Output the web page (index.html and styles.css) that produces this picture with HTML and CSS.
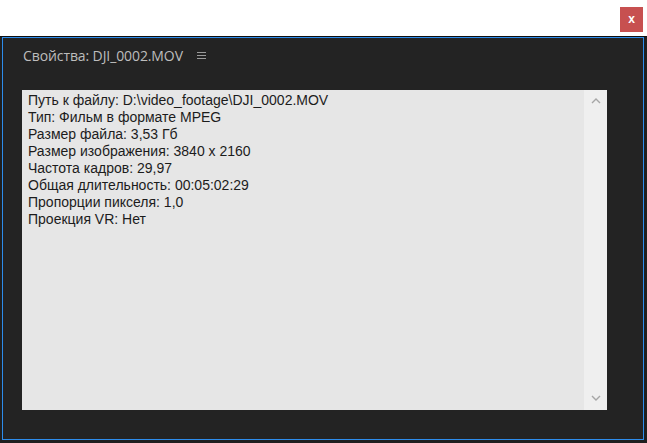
FILE: index.html
```html
<!DOCTYPE html>
<html lang="ru">
<head>
<meta charset="utf-8">
<link rel="stylesheet" href="styles.css">
</head>
<body>
<div class="titlebar">
  <div class="close">x</div>
</div>
<div class="frame">
  <div class="panel">
    <div class="panel-head">
      <span class="panel-title">Свойства: DJI_0002.MOV</span>
      <svg class="menu" width="9" height="8" viewBox="0 0 9 8"><rect x="0" y="0" width="9" height="1" fill="#9a9a9a"/><rect x="0" y="3" width="9" height="1" fill="#9a9a9a"/><rect x="0" y="6" width="9" height="1" fill="#9a9a9a"/></svg>
    </div>
    <div class="box">
      <div class="lines">
        <div>Путь к файлу: D:\video_footage\DJI_0002.MOV</div>
        <div>Тип: Фильм в формате MPEG</div>
        <div>Размер файла: 3,53 Гб</div>
        <div>Размер изображения: 3840 x 2160</div>
        <div>Частота кадров: 29,97</div>
        <div>Общая длительность: 00:05:02:29</div>
        <div>Пропорции пикселя: 1,0</div>
        <div>Проекция VR: Нет</div>
      </div>
      <div class="scroll">
        <svg width="10" height="6" viewBox="0 0 10 6"><path d="M1 5 L5 1 L9 5" fill="none" stroke="#a6a6a6" stroke-width="1.4"/></svg>
        <svg width="10" height="6" viewBox="0 0 10 6"><path d="M1 1 L5 5 L9 1" fill="none" stroke="#a6a6a6" stroke-width="1.4"/></svg>
      </div>
    </div>
  </div>
</div>
</body>
</html>
```
FILE: styles.css
```css
html, body {
  margin: 0;
  padding: 0;
}
body {
  width: 647px;
  height: 443px;
  overflow: hidden;
  background: #1f1f1f;
  font-family: "Liberation Sans", Arial, sans-serif;
}
.titlebar {
  height: 36px;
  background: #ffffff;
  display: flex;
  justify-content: flex-end;
  align-items: flex-start;
  padding-right: 4px;
  box-sizing: border-box;
}
.close {
  margin-top: 7px;
  width: 23px;
  height: 25px;
  background: #c75050;
  color: #ffffff;
  font-weight: bold;
  font-size: 12px;
  line-height: 24px;
  text-align: center;
}
.frame {
  height: 407px;
  border-top: 1px solid #0f0f0f;
  box-sizing: border-box;
  padding: 0 3px 3px 2px;
  display: flex;
}
.panel {
  flex: 1;
  border: 1px solid #2d8ceb;
  background: #232323;
  display: flex;
  flex-direction: column;
  padding: 9px 0 0 19px;
}
.panel-head {
  display: flex;
  align-items: center;
  height: 17px;
  gap: 14px;
  padding-left: 1px;
}
.panel-title {
  color: #bdbdbd;
  font-size: 14px;
  font-family: "Open Sans", "Liberation Sans", sans-serif;
  letter-spacing: -0.1px;
}
.menu {
  margin-top: 1px;
}
.box {
  margin-top: 26px;
  width: 585px;
  height: 320px;
  background: #e6e6e6;
  display: flex;
}
.lines {
  flex: 1;
  padding: 2px 0 0 6px;
  font-size: 14px;
  line-height: 17px;
  color: #1c1c1c;
}
.scroll {
  width: 23px;
  background: #efefef;
  display: flex;
  flex-direction: column;
  justify-content: space-between;
  align-items: center;
  padding: 8px 0 9px;
  box-sizing: border-box;
}
```
